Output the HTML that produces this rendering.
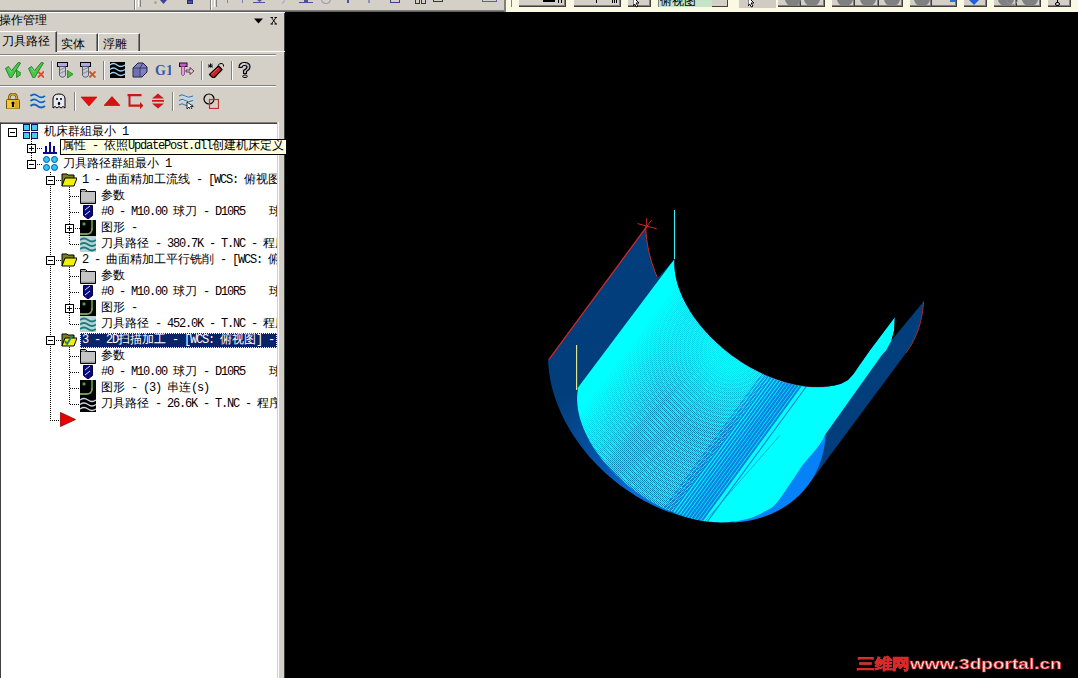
<!DOCTYPE html>
<html><head><meta charset="utf-8">
<style>
*{margin:0;padding:0;box-sizing:border-box}
html,body{width:1078px;height:678px;overflow:hidden;background:#d4d0c8;font-family:"Liberation Sans",sans-serif;position:relative}
.a{position:absolute}
.row{position:absolute;height:16px;line-height:16px;white-space:nowrap;font-family:"Liberation Mono",monospace;font-size:12px;letter-spacing:-1.2px;color:#000}
.row i{font-style:normal;font-size:12px;letter-spacing:0}
.bx{position:absolute;width:9px;height:9px;border:1px solid #000;background:#fff}
.bx:before{content:"";position:absolute;left:1px;top:3px;width:5px;height:1px;background:#000}
.bx.p:after{content:"";position:absolute;left:3px;top:1px;width:1px;height:5px;background:#000}
.dv{position:absolute;width:1px;background-image:linear-gradient(#000 50%,transparent 50%);background-size:1px 2px}
.dh{position:absolute;height:1px;background-image:linear-gradient(90deg,#000 50%,transparent 50%);background-size:2px 1px}
</style></head><body>
<div class="a" style="left:0;top:0;width:505px;height:10px;background:#d4d0c8"></div>
<div class="a" style="left:505px;top:0;width:573px;height:12px;background:#fbf9e2"></div>
<div class="a" style="left:0;top:10px;width:505px;height:1px;background:#808080"></div>
<div class="a" style="left:0;top:11px;width:505px;height:1px;background:#606060"></div>
<div class="a" style="left:0;top:12px;width:285px;height:1px;background:#fff"></div>
<div class="a" style="left:134px;top:0;width:1px;height:10px;background:#808080"></div>
<div class="a" style="left:135px;top:0;width:1px;height:10px;background:#fff"></div>
<div class="a" style="left:210px;top:0;width:1px;height:10px;background:#808080"></div>
<div class="a" style="left:211px;top:0;width:1px;height:10px;background:#fff"></div>
<div class="a" style="left:504px;top:0;width:2px;height:12px;background:#808080"></div>
<div class="a" style="left:138px;top:0;width:3px;height:7px;border-left:1px solid #fff;border-right:1px solid #808080"></div>
<div class="a" style="left:214px;top:0;width:3px;height:7px;border-left:1px solid #fff;border-right:1px solid #808080"></div>
<div class="a" style="left:509px;top:0;width:3px;height:7px;border-left:1px solid #fff;border-right:1px solid #808080"></div>
<div class="a" style="left:154px;top:1px;width:3px;height:3px;border-radius:2px;background:#b0a890"></div>
<svg class="a" style="left:160px;top:0" width="8" height="5"><path d="M0 0h7l-3.5 4z" fill="#4040a0"/></svg>
<div class="a" style="left:187px;top:0;width:6px;height:4px;background:#5050a0;border:1px solid #303070"></div>
<div class="a" style="left:227px;top:0;width:1px;height:3px;background:#8080b0"></div>
<div class="a" style="left:242px;top:0;width:1px;height:3px;background:#8080b0"></div>
<div class="a" style="left:253px;top:2px;width:12px;height:1px;background:#5050a0"></div>
<svg class="a" style="left:257px;top:0" width="6" height="3"><path d="M0 0h5l-2.5 2z" fill="#5050a0"/></svg>
<div class="a" style="left:283px;top:0;width:1px;height:4px;background:#a0a0b0;transform:rotate(40deg)"></div>
<div class="a" style="left:299px;top:2px;width:14px;height:1px;background:#5050a0"></div>
<div class="a" style="left:304px;top:0;width:4px;height:2px;background:#5050a0"></div>
<div class="a" style="left:321px;top:-5px;width:10px;height:9px;border-radius:5px;border:1px solid #9090a0"></div>
<div class="a" style="left:347px;top:0;width:2px;height:3px;background:#5050a0"></div>
<div class="a" style="left:368px;top:0;width:2px;height:3px;background:#9090c0"></div>
<div class="a" style="left:390px;top:0;width:10px;height:3px;border:1px solid #404080;border-top:0"></div>
<div class="a" style="left:415px;top:-3px;width:5px;height:7px;border:1.5px solid #303070"></div>
<div class="a" style="left:421px;top:-3px;width:5px;height:7px;border:1.5px solid #303070"></div>
<div class="a" style="left:433px;top:-2px;width:10px;height:4px;border:1.5px solid #303070"></div>
<div class="a" style="left:482px;top:-2px;width:15px;height:4px;border:1px solid #6060a0"></div>
<div class="a" style="left:519px;top:-2px;width:47px;height:9px;background:#d4d0c8;border-right:1px solid #404040;border-bottom:1px solid #404040;box-shadow:inset -1px -1px #808080"></div>
<div class="a" style="left:574px;top:-2px;width:47px;height:9px;background:#d4d0c8;border-right:1px solid #404040;border-bottom:1px solid #404040;box-shadow:inset -1px -1px #808080"></div>
<div class="a" style="left:628px;top:-2px;width:23px;height:9px;background:#d4d0c8;border-right:1px solid #404040;border-bottom:1px solid #404040;box-shadow:inset -1px -1px #808080"></div>
<div class="a" style="left:778px;top:-2px;width:23px;height:9px;background:#d4d0c8;border-right:1px solid #404040;border-bottom:1px solid #404040;box-shadow:inset -1px -1px #808080"></div>
<div class="a" style="left:801px;top:-2px;width:24px;height:9px;background:#d4d0c8;border-right:1px solid #404040;border-bottom:1px solid #404040;box-shadow:inset -1px -1px #808080"></div>
<div class="a" style="left:832px;top:-2px;width:23px;height:9px;background:#d4d0c8;border-right:1px solid #404040;border-bottom:1px solid #404040;box-shadow:inset -1px -1px #808080"></div>
<div class="a" style="left:855px;top:-2px;width:24px;height:9px;background:#d4d0c8;border-right:1px solid #404040;border-bottom:1px solid #404040;box-shadow:inset -1px -1px #808080"></div>
<div class="a" style="left:879px;top:-2px;width:24px;height:9px;background:#d4d0c8;border-right:1px solid #404040;border-bottom:1px solid #404040;box-shadow:inset -1px -1px #808080"></div>
<div class="a" style="left:910px;top:-2px;width:22px;height:9px;background:#d4d0c8;border-right:1px solid #404040;border-bottom:1px solid #404040;box-shadow:inset -1px -1px #808080"></div>
<div class="a" style="left:932px;top:-2px;width:25px;height:9px;background:#d4d0c8;border-right:1px solid #404040;border-bottom:1px solid #404040;box-shadow:inset -1px -1px #808080"></div>
<div class="a" style="left:964px;top:-2px;width:23px;height:9px;background:#d4d0c8;border-right:1px solid #404040;border-bottom:1px solid #404040;box-shadow:inset -1px -1px #808080"></div>
<div class="a" style="left:994px;top:-2px;width:23px;height:9px;background:#d4d0c8;border-right:1px solid #404040;border-bottom:1px solid #404040;box-shadow:inset -1px -1px #808080"></div>
<div class="a" style="left:1017px;top:-2px;width:24px;height:9px;background:#d4d0c8;border-right:1px solid #404040;border-bottom:1px solid #404040;box-shadow:inset -1px -1px #808080"></div>
<div class="a" style="left:1048px;top:-2px;width:23px;height:9px;background:#d4d0c8;border-right:1px solid #404040;border-bottom:1px solid #404040;box-shadow:inset -1px -1px #808080"></div>
<div class="a" style="left:739px;top:-2px;width:37px;height:10px;background:#d0ccc4"></div>
<div class="a" style="left:658px;top:-2px;width:70px;height:9px;background:#c4e4c8;border-left:1px solid #808080"></div>
<div class="a" style="left:712px;top:-2px;width:16px;height:9px;background:#d4d0c8;border-right:1px solid #404040;border-bottom:1px solid #404040"></div>
<div class="a" style="left:660px;top:-5px;font-size:12px;line-height:12px;color:#000;width:50px;overflow:hidden;height:11px">俯视图</div>
<div class="a" style="left:543px;top:0;width:12px;height:2px;background:#000"></div>
<div class="a" style="left:558px;top:0;width:1px;height:3px;background:#000"></div><div class="a" style="left:561px;top:0;width:1px;height:3px;background:#000"></div>
<div class="a" style="left:596px;top:0;width:1px;height:3px;background:#000"></div>
<div class="a" style="left:612px;top:0;width:1px;height:3px;background:#000"></div><div class="a" style="left:614px;top:0;width:1px;height:3px;background:#000"></div><div class="a" style="left:616px;top:0;width:1px;height:3px;background:#000"></div>
<svg class="a" style="left:633px;top:-3px" width="12" height="12"><path d="M0 0l6 6h-3l2 3-1.5 1-2-3-1.5 2z" fill="#fff" stroke="#000" stroke-width="1"/></svg>
<svg class="a" style="left:748px;top:-3px" width="12" height="12"><path d="M0 0l6 6h-3l2 3-1.5 1-2-3-1.5 2z" fill="#fff" stroke="#000" stroke-width="1"/></svg>
<div class="a" style="left:785px;top:-8px;width:16px;height:14px;border-radius:8px;background:#808080"></div>
<div class="a" style="left:804px;top:-8px;width:16px;height:14px;border-radius:8px;background:#808080"></div>
<div class="a" style="left:837px;top:-8px;width:16px;height:14px;border-radius:8px;background:#808080"></div>
<div class="a" style="left:860px;top:-8px;width:16px;height:14px;border-radius:8px;background:#808080"></div>
<div class="a" style="left:884px;top:-8px;width:16px;height:14px;border-radius:8px;background:#808080"></div>
<div class="a" style="left:914px;top:-8px;width:16px;height:14px;border-radius:8px;background:#808080"></div>
<div class="a" style="left:998px;top:-8px;width:16px;height:14px;border-radius:8px;background:#808080"></div>
<div class="a" style="left:1022px;top:-8px;width:16px;height:14px;border-radius:8px;background:#808080"></div>
<div class="a" style="left:950px;top:0;width:6px;height:2px;background:#3070d0"></div>
<svg class="a" style="left:969px;top:0" width="12" height="6"><path d="M0 0l5 5 5-5z" fill="#2060e0"/></svg>
<div class="a" style="left:1055px;top:2px;width:5px;height:4px;border:1px solid #000;border-radius:2px"></div>
<div class="a" style="left:1057px;top:-1px;width:1px;height:3px;background:#000"></div>
<div class="a" style="left:1006px;top:-6px;width:12px;height:11px;border-radius:6px;border:1.5px solid #909090;background:transparent"></div>
<div class="a" style="left:285px;top:12px;width:793px;height:666px;background:#000"></div>
<div class="a" style="left:284px;top:13px;width:1px;height:665px;background:#404040"></div>
<div class="a" style="left:-1px;top:13px;font-size:12px;line-height:14px;color:#000">操作管理</div>
<svg class="a" style="left:254px;top:16px" width="30" height="10"><path d="M0 2.5h9l-4.5 5z" fill="#000"/><path d="M17.5 1.5l4.5 6.5M22 1.5l-4.5 6.5" stroke="#000" stroke-width="0.9" fill="none"/><path d="M16.5 1.5h2.5M20.5 1.5h2.5M16.5 8h2.5M20.5 8h2.5" stroke="#000" stroke-width="1.1"/></svg>
<div class="a" style="left:57px;top:51px;width:228px;height:1px;background:#fff"></div>
<div class="a" style="left:-1px;top:31px;width:58px;height:21px;background:#d4d0c8;border-top:1px solid #fff;border-right:1px solid #404040;box-shadow:inset -1px 0 #808080"></div>
<div class="a" style="left:2px;top:34px;font-size:12px;line-height:14px">刀具路径</div>
<div class="a" style="left:58px;top:33px;width:40px;height:18px;border-top:1px solid #fff;border-right:1px solid #404040;box-shadow:inset -1px 0 #808080"></div>
<div class="a" style="left:61px;top:37px;font-size:12px;line-height:14px">实体</div>
<div class="a" style="left:98px;top:33px;width:42px;height:18px;border-top:1px solid #fff;border-left:1px solid #fff;border-right:1px solid #404040;box-shadow:inset -1px 0 #808080"></div>
<div class="a" style="left:103px;top:37px;font-size:12px;line-height:14px">浮雕</div>
<div class="a" style="left:0;top:54px;width:276px;height:1px;background:#808080"></div>
<div class="a" style="left:0;top:55px;width:276px;height:1px;background:#fff"></div>
<div class="a" style="left:0;top:85px;width:276px;height:1px;background:#808080"></div>
<div class="a" style="left:0;top:86px;width:276px;height:1px;background:#fff"></div>
<div class="a" style="left:51px;top:61px;width:1px;height:19px;background:#808080"></div>
<div class="a" style="left:52px;top:61px;width:1px;height:19px;background:#fff"></div>
<div class="a" style="left:103px;top:61px;width:1px;height:19px;background:#808080"></div>
<div class="a" style="left:104px;top:61px;width:1px;height:19px;background:#fff"></div>
<div class="a" style="left:201px;top:61px;width:1px;height:19px;background:#808080"></div>
<div class="a" style="left:202px;top:61px;width:1px;height:19px;background:#fff"></div>
<div class="a" style="left:231px;top:61px;width:1px;height:19px;background:#808080"></div>
<div class="a" style="left:232px;top:61px;width:1px;height:19px;background:#fff"></div>
<div class="a" style="left:74px;top:92px;width:1px;height:19px;background:#808080"></div>
<div class="a" style="left:75px;top:92px;width:1px;height:19px;background:#fff"></div>
<div class="a" style="left:172px;top:92px;width:1px;height:19px;background:#808080"></div>
<div class="a" style="left:173px;top:92px;width:1px;height:19px;background:#fff"></div>
<svg class="a" style="left:5px;top:62px" width="16" height="16" viewBox="0 0 16 16">
<path d="M0.5 6.5l3-2 3 4.2 7-8.5 2 0.8-9 14.8h-1.5z" fill="#48c848" stroke="#207820" stroke-width="0.9" stroke-linejoin="round"/>
<path d="M3.5 6.2l2.8 3.8" stroke="#90e890" stroke-width="0.8"/>
<path d="M11.5 8v7.7l5.5-3.9z" fill="#40c040" stroke="#208020" stroke-width="0.8"/></svg>
<svg class="a" style="left:28px;top:62px" width="16" height="16" viewBox="0 0 16 16">
<path d="M0.5 6.5l3-2 3 4.2 7-8.5 2 0.8-9 14.8h-1.5z" fill="#48c848" stroke="#207820" stroke-width="0.9" stroke-linejoin="round"/>
<path d="M3.5 6.2l2.8 3.8" stroke="#90e890" stroke-width="0.8"/>
<path d="M10 9.5l6 6M16 9.5l-6 6" stroke="#d85030" stroke-width="1.8"/></svg>
<svg class="a" style="left:57px;top:62px" width="16" height="16" viewBox="0 0 16 16">
<rect x="0.5" y="0.5" width="10" height="4" fill="#b0a8e0" stroke="#000" stroke-width="1"/>
<path d="M2.5 4.5h6v9q-3 3.5-6 0z" fill="#c8c8d8" stroke="#505060" stroke-width="0.9"/>
<path d="M3 8l5-2.5M3 11.5l5-2.5" stroke="#808090" stroke-width="0.9"/>
<path d="M10.5 8.5v7.5l5.5-3.75z" fill="#40c040" stroke="#208020" stroke-width="0.8"/></svg>
<svg class="a" style="left:80px;top:62px" width="16" height="16" viewBox="0 0 16 16">
<rect x="0.5" y="0.5" width="10" height="4" fill="#b0a8e0" stroke="#000" stroke-width="1"/>
<path d="M2.5 4.5h6v9q-3 3.5-6 0z" fill="#c8c8d8" stroke="#505060" stroke-width="0.9"/>
<path d="M3 8l5-2.5M3 11.5l5-2.5" stroke="#808090" stroke-width="0.9"/>
<path d="M9.5 9.5l6 6M15.5 9.5l-6 6" stroke="#d85030" stroke-width="1.8"/></svg>
<svg class="a" style="left:110px;top:62px" width="16" height="16" viewBox="0 0 16 16">
<rect x="0" y="0" width="15" height="16" fill="#000"/>
<path d="M0 3q3.5-3 7 0t8 0M0 7.5q3.5-3 7 0t8 0M0 12q3.5-3 7 0t8 0" stroke="#a0d0f0" stroke-width="1.3" fill="none"/></svg>
<svg class="a" style="left:132px;top:62px" width="16" height="16" viewBox="0 0 16 16">
<path d="M1 6l5-5h5l4 4v5l-5 5H1z" fill="#8080c0" stroke="#202040" stroke-width="1"/>
<path d="M1 6h7l3-5M8 6v9M8 6l7 0" stroke="#303060" stroke-width="0.9" fill="none"/>
<path d="M2 7h5v7H2z" fill="#7070b0"/></svg>
<svg class="a" style="left:155px;top:62px" width="16" height="16" viewBox="0 0 16 16"><text x="0" y="13" font-family="Liberation Serif" font-weight="bold" font-size="14" fill="#3a5aa0">G1</text></svg>
<svg class="a" style="left:179px;top:62px" width="16" height="16" viewBox="0 0 16 16">
<rect x="0.5" y="1" width="7.5" height="3.5" fill="#c060c0" stroke="#300030" stroke-width="1"/>
<path d="M2.5 4.5h3v8q-1.5 2.5-3 0z" fill="#e0a0e0" stroke="#804080" stroke-width="0.8"/>
<path d="M7 8h4v-2.5l4 3.5-4 3.5v-2.5h-4z" fill="#f0c0e0" stroke="#402030" stroke-width="0.8"/></svg>
<svg class="a" style="left:208px;top:62px" width="16" height="16" viewBox="0 0 16 16">
<path d="M1.5 12.5l9-8.5 3.5 3.5-8.5 9z" fill="#d02020" stroke="#000" stroke-width="1.3" stroke-linejoin="round"/>
<path d="M3 12.5l7-6.5" stroke="#f06060" stroke-width="1"/>
<path d="M10 3.5q1-2.5 4-2 2 0.5 1.5 3" stroke="#000" stroke-width="1" fill="none"/>
<path d="M0.5 2.5l4 3M4.5 2l-4 3.5M0 4h5M2.5 1.5v4" stroke="#000" stroke-width="0.9"/></svg>
<svg class="a" style="left:236px;top:62px" width="16" height="16" viewBox="0 0 16 16">
<path d="M3 5.5q0-5 5.5-5t5.5 4.5q0 2.5-3.5 4.5v2H7.5V8.5q3.5-2 3.5-3.5t-2.5-1.5q-2.5 0-2.5 2z" fill="#b4b4bc" stroke="#000" stroke-width="1.1" stroke-linejoin="round"/>
<path d="M5 4q1-2.5 4-2.5" stroke="#f0f0f0" stroke-width="1" fill="none"/>
<ellipse cx="9" cy="14.3" rx="2.3" ry="1.3" fill="#c8c8d0" stroke="#000" stroke-width="1"/></svg>
<svg class="a" style="left:6px;top:93px" width="16" height="16" viewBox="0 0 16 16">
<path d="M3.2 8V5.5q0-4.5 3.8-4.5t3.8 4.5V8" stroke="#705000" stroke-width="2.6" fill="none"/>
<path d="M3.2 8V5.5q0-4.5 3.8-4.5t3.8 4.5V8" stroke="#f0d050" stroke-width="1" fill="none"/>
<rect x="0.5" y="6.5" width="13" height="9.5" rx="1" fill="#f0c830" stroke="#705000" stroke-width="1"/>
<rect x="9" y="7.5" width="3.5" height="7.5" fill="#d8a820"/>
<circle cx="7" cy="10" r="1.5" fill="#000"/><path d="M6.2 10.5h1.6l0.3 3.5h-2.2z" fill="#000"/></svg>
<svg class="a" style="left:30px;top:93px" width="16" height="16" viewBox="0 0 16 16">
<path d="M0.5 3q3.5-3 7 0t7.5 0M0.5 8q3.5-3 7 0t7.5 0M0.5 13q3.5-3 7 0t7.5 0" stroke="#1860c0" stroke-width="2" fill="none"/>
<path d="M1 4.6q3.5-3 7 0t7 0M1 9.6q3.5-3 7 0t7 0" stroke="#b0dcff" stroke-width="1.1" fill="none"/></svg>
<svg class="a" style="left:52px;top:93px" width="16" height="16" viewBox="0 0 16 16">
<path d="M1 15V6q0-5 6-5t6 5v9l-2-1.5-2 1.5-2-1.5-2 1.5-2-1.5z" fill="#e8e8f0" stroke="#000" stroke-width="1"/>
<circle cx="5" cy="6" r="1" fill="#000"/><circle cx="9" cy="6" r="1" fill="#000"/><ellipse cx="7" cy="10.5" rx="1.2" ry="1.8" fill="#000"/></svg>
<svg class="a" style="left:81px;top:93px" width="16" height="16" viewBox="0 0 16 16"><path d="M0 4h16l-8 9z" fill="#e01010" stroke="#c00000" stroke-width="0.6"/></svg>
<svg class="a" style="left:104px;top:93px" width="16" height="16" viewBox="0 0 16 16"><path d="M0 12.5h16l-8-9z" fill="#d81010" stroke="#b00000" stroke-width="0.6"/></svg>
<svg class="a" style="left:127px;top:93px" width="16" height="16" viewBox="0 0 16 16"><path d="M0.5 1h14v2.2H3.5v8.3h9.5v-2.5l3.5 3.6-3.5 3.6v-2.5H1.5V3.2h-1z" fill="#c81818"/></svg>
<svg class="a" style="left:151px;top:93px" width="16" height="16" viewBox="0 0 16 16"><path d="M7 0.5l6 5H1z M1 7h12v1.8H1z M1 10.5h12l-6 5z" fill="#d01818"/></svg>
<svg class="a" style="left:179px;top:93px" width="16" height="16" viewBox="0 0 16 16">
<path d="M0 3q3-2.5 6 0t8 0M0 7.5q3-2.5 6 0t8 0M0 12q3-2.5 6 0t8 0" stroke="#3070b0" stroke-width="1" fill="none"/>
<path d="M1 4.5q3-2.5 6 0t7 0M1 9q3-2.5 6 0t7 0" stroke="#b8e0ff" stroke-width="1" fill="none"/>
<path d="M8 9l0 7 2-2 1.5 3 1.5-0.8-1.5-2.7h2.8z" fill="#fff" stroke="#000" stroke-width="0.8"/></svg>
<svg class="a" style="left:203px;top:93px" width="16" height="16" viewBox="0 0 16 16">
<circle cx="6" cy="6" r="5" fill="none" stroke="#000" stroke-width="1.2"/>
<rect x="6.5" y="6.5" width="9" height="9" fill="none" stroke="#c03030" stroke-width="1.2"/></svg>
<div class="a" style="left:0;top:122px;width:278px;height:556px;background:#fff;border-left:1px solid #404040;border-top:1px solid #808080;box-shadow:inset 0 1px #404040"></div>
<div class="a" style="left:278px;top:122px;width:1px;height:556px;background:#fff"></div>
<div class="a" style="left:277px;top:122px;width:1px;height:556px;background:#d4d0c8"></div>
<div class="a" style="left:0;top:0;width:277px;height:678px;overflow:hidden"><div class="dv" style="left:31px;top:139px;height:26px"></div><div class="dh" style="left:37px;top:148px;width:6px"></div><div class="dh" style="left:37px;top:164px;width:6px"></div><div class="dv" style="left:50px;top:172px;height:168px"></div><div class="dh" style="left:56px;top:180px;width:5px"></div><div class="dh" style="left:56px;top:260px;width:5px"></div><div class="dh" style="left:56px;top:340px;width:5px"></div><div class="dh" style="left:50px;top:420px;width:10px"></div><div class="dv" style="left:50px;top:340px;height:80px"></div><div class="dv" style="left:69px;top:187px;height:57px"></div><div class="dh" style="left:70px;top:196px;width:10px"></div><div class="dh" style="left:70px;top:212px;width:10px"></div><div class="dh" style="left:75px;top:228px;width:5px"></div><div class="dh" style="left:70px;top:244px;width:10px"></div><div class="dv" style="left:69px;top:267px;height:57px"></div><div class="dh" style="left:70px;top:276px;width:10px"></div><div class="dh" style="left:70px;top:292px;width:10px"></div><div class="dh" style="left:75px;top:308px;width:5px"></div><div class="dh" style="left:70px;top:324px;width:10px"></div><div class="dv" style="left:69px;top:347px;height:57px"></div><div class="dh" style="left:70px;top:356px;width:10px"></div><div class="dh" style="left:70px;top:372px;width:10px"></div><div class="dh" style="left:70px;top:388px;width:10px"></div><div class="dh" style="left:70px;top:404px;width:10px"></div><div class="bx " style="left:8px;top:128px"></div><svg class="a" style="left:23px;top:124px" width="15" height="15" viewBox="0 0 15 15"><g fill="#40d0e8" stroke="#101070" stroke-width="1"><rect x="0.5" y="0.5" width="6" height="6"/><rect x="8.5" y="0.5" width="6" height="6"/><rect x="0.5" y="8.5" width="6" height="6"/><rect x="8.5" y="8.5" width="6" height="6"/></g></svg><div class="row" style="left:44px;top:124px;color:#000"><i>机床群組最小</i>&nbsp;1</div><div class="bx p" style="left:27px;top:144px"></div><svg class="a" style="left:43px;top:142px" width="14" height="12" viewBox="0 0 14 12"><g fill="#0a0a90"><rect x="0" y="10" width="14" height="2"/><rect x="2" y="4" width="2" height="6"/><rect x="6" y="0" width="2" height="10"/><rect x="10" y="4" width="2" height="6"/></g></svg><div class="row" style="left:63px;top:140px;color:#000"><i>属性</i></div><div class="bx " style="left:27px;top:160px"></div><svg class="a" style="left:43px;top:156px" width="15" height="15" viewBox="0 0 15 15"><g fill="#28c8f0" stroke="#0850b0" stroke-width="1"><circle cx="3.5" cy="3.5" r="3"/><circle cx="11.5" cy="3.5" r="3"/><circle cx="3.5" cy="11.5" r="3"/><circle cx="11.5" cy="11.5" r="3"/></g></svg><div class="row" style="left:63px;top:156px;color:#000"><i>刀具路径群組最小</i>&nbsp;1</div><div class="bx " style="left:46px;top:176px"></div><svg class="a" style="left:61px;top:172px" width="16" height="16" viewBox="0 0 16 16">
<path d="M1 14V2h5l1 1h6v3" fill="#808020" stroke="#000" stroke-width="1"/>
<path d="M1 14l3-8h12l-3 8z" fill="#f0f010" stroke="#000" stroke-width="1"/></svg><div class="row" style="left:82px;top:172px;color:#000">1&nbsp;-&nbsp;<i>曲面精加工流线</i>&nbsp;-&nbsp;[WCS:&nbsp;<i>俯视图</i>]&nbsp;-&nbsp;[<i>刀具面</i>:&nbsp;<i>俯视图</i>]</div><svg class="a" style="left:80px;top:188px" width="16" height="16" viewBox="0 0 16 16">
<path d="M0.5 15.5V1.5h5l2 2h8v12z" fill="#c4c4c4" stroke="#000" stroke-width="1"/>
<path d="M0.5 3.5h7" stroke="#000" stroke-width="0.8"/><rect x="2" y="2.5" width="3" height="1.5" fill="#888"/>
<rect x="1" y="13.5" width="14" height="1.5" fill="#999"/></svg><div class="row" style="left:101px;top:188px;color:#000"><i>参数</i></div><svg class="a" style="left:83px;top:205px" width="10" height="15" viewBox="0 0 10 15"><path d="M0.5 0.5h9v10l-4.5 3.5-4.5-3.5z" fill="#0a0a80" stroke="#000040" stroke-width="1"/><path d="M2 5l5-4M2 10l5-4" stroke="#fff" stroke-width="0.9"/></svg><div class="row" style="left:101px;top:204px;color:#000">#0&nbsp;-&nbsp;M10.00&nbsp;<i>球刀</i>&nbsp;-&nbsp;D10R5&nbsp;&nbsp;&nbsp;&nbsp;<i>球刀</i></div><div class="bx p" style="left:65px;top:224px"></div><svg class="a" style="left:80px;top:220px" width="16" height="16" viewBox="0 0 16 16"><rect x="0" y="0" width="16" height="16" fill="#000"/><path d="M4 2l2 2-2 2-2-2z" fill="#40a040"/><path d="M12 0v9q0 5-5 5H0" stroke="#60c060" stroke-width="1.4" fill="none"/><path d="M12 8q0 6-6 6H0" stroke="#a0a040" stroke-width="1" fill="none"/></svg><div class="row" style="left:101px;top:220px;color:#000"><i>图形</i>&nbsp;-</div><svg class="a" style="left:80px;top:236px" width="16" height="16" viewBox="0 0 16 16"><rect x="0" y="0" width="16" height="16" fill="#b8d4d8"/><path d="M0 4q4-3 8 0t8 0M0 8.5q4-3 8 0t8 0M0 13q4-3 8 0t8 0" stroke="#1a7a7a" stroke-width="1.8" fill="none"/></svg><div class="row" style="left:101px;top:236px;color:#000"><i>刀具路径</i>&nbsp;-&nbsp;380.7K&nbsp;-&nbsp;T.NC&nbsp;-&nbsp;<i>程序号码</i>&nbsp;0</div><div class="bx " style="left:46px;top:256px"></div><svg class="a" style="left:61px;top:252px" width="16" height="16" viewBox="0 0 16 16">
<path d="M1 14V2h5l1 1h6v3" fill="#808020" stroke="#000" stroke-width="1"/>
<path d="M1 14l3-8h12l-3 8z" fill="#f0f010" stroke="#000" stroke-width="1"/></svg><div class="row" style="left:82px;top:252px;color:#000">2&nbsp;-&nbsp;<i>曲面精加工平行铣削</i>&nbsp;-&nbsp;[WCS:&nbsp;<i>俯视图</i>]</div><svg class="a" style="left:80px;top:268px" width="16" height="16" viewBox="0 0 16 16">
<path d="M0.5 15.5V1.5h5l2 2h8v12z" fill="#c4c4c4" stroke="#000" stroke-width="1"/>
<path d="M0.5 3.5h7" stroke="#000" stroke-width="0.8"/><rect x="2" y="2.5" width="3" height="1.5" fill="#888"/>
<rect x="1" y="13.5" width="14" height="1.5" fill="#999"/></svg><div class="row" style="left:101px;top:268px;color:#000"><i>参数</i></div><svg class="a" style="left:83px;top:285px" width="10" height="15" viewBox="0 0 10 15"><path d="M0.5 0.5h9v10l-4.5 3.5-4.5-3.5z" fill="#0a0a80" stroke="#000040" stroke-width="1"/><path d="M2 5l5-4M2 10l5-4" stroke="#fff" stroke-width="0.9"/></svg><div class="row" style="left:101px;top:284px;color:#000">#0&nbsp;-&nbsp;M10.00&nbsp;<i>球刀</i>&nbsp;-&nbsp;D10R5&nbsp;&nbsp;&nbsp;&nbsp;<i>球刀</i></div><div class="bx p" style="left:65px;top:304px"></div><svg class="a" style="left:80px;top:300px" width="16" height="16" viewBox="0 0 16 16"><rect x="0" y="0" width="16" height="16" fill="#000"/><path d="M4 2l2 2-2 2-2-2z" fill="#40a040"/><path d="M12 0v9q0 5-5 5H0" stroke="#60c060" stroke-width="1.4" fill="none"/><path d="M12 8q0 6-6 6H0" stroke="#a0a040" stroke-width="1" fill="none"/></svg><div class="row" style="left:101px;top:300px;color:#000"><i>图形</i>&nbsp;-</div><svg class="a" style="left:80px;top:316px" width="16" height="16" viewBox="0 0 16 16"><rect x="0" y="0" width="16" height="16" fill="#b8d4d8"/><path d="M0 4q4-3 8 0t8 0M0 8.5q4-3 8 0t8 0M0 13q4-3 8 0t8 0" stroke="#1a7a7a" stroke-width="1.8" fill="none"/></svg><div class="row" style="left:101px;top:316px;color:#000"><i>刀具路径</i>&nbsp;-&nbsp;452.0K&nbsp;-&nbsp;T.NC&nbsp;-&nbsp;<i>程序号码</i>&nbsp;0</div><div class="bx " style="left:46px;top:336px"></div><svg class="a" style="left:61px;top:332px" width="16" height="16" viewBox="0 0 16 16">
<path d="M1 14V2h5l1 1h6v3" fill="#808020" stroke="#000" stroke-width="1"/>
<path d="M1 14l3-8h12l-3 8z" fill="#f0f010" stroke="#000" stroke-width="1"/>
<path d="M4 9l2 3 5-8" stroke="#208080" stroke-width="2" fill="none"/></svg><div class="a" style="left:80px;top:333px;width:197px;height:15px;background:#0a246a;outline:1px dotted #fff;outline-offset:-1px"></div><div class="row" style="left:82px;top:332px;color:#fff">3&nbsp;-&nbsp;2D<i>扫描加工</i>&nbsp;-&nbsp;[WCS:&nbsp;<i>俯视图</i>]&nbsp;-&nbsp;[<i>刀具面</i>:&nbsp;<i>俯视图</i>]</div><svg class="a" style="left:80px;top:348px" width="16" height="16" viewBox="0 0 16 16">
<path d="M0.5 15.5V1.5h5l2 2h8v12z" fill="#c4c4c4" stroke="#000" stroke-width="1"/>
<path d="M0.5 3.5h7" stroke="#000" stroke-width="0.8"/><rect x="2" y="2.5" width="3" height="1.5" fill="#888"/>
<rect x="1" y="13.5" width="14" height="1.5" fill="#999"/></svg><div class="row" style="left:101px;top:348px;color:#000"><i>参数</i></div><svg class="a" style="left:83px;top:365px" width="10" height="15" viewBox="0 0 10 15"><path d="M0.5 0.5h9v10l-4.5 3.5-4.5-3.5z" fill="#0a0a80" stroke="#000040" stroke-width="1"/><path d="M2 5l5-4M2 10l5-4" stroke="#fff" stroke-width="0.9"/></svg><div class="row" style="left:101px;top:364px;color:#000">#0&nbsp;-&nbsp;M10.00&nbsp;<i>球刀</i>&nbsp;-&nbsp;D10R5&nbsp;&nbsp;&nbsp;&nbsp;<i>球刀</i></div><svg class="a" style="left:80px;top:380px" width="16" height="16" viewBox="0 0 16 16"><rect x="0" y="0" width="16" height="16" fill="#000"/><path d="M4 2l2 2-2 2-2-2z" fill="#40a040"/><path d="M12 0v9q0 5-5 5H0" stroke="#60c060" stroke-width="1.4" fill="none"/><path d="M12 8q0 6-6 6H0" stroke="#a0a040" stroke-width="1" fill="none"/></svg><div class="row" style="left:101px;top:380px;color:#000"><i>图形</i>&nbsp;-&nbsp;(3)&nbsp;<i>串连</i>(s)</div><svg class="a" style="left:80px;top:396px" width="16" height="16" viewBox="0 0 16 16"><rect x="0" y="0" width="16" height="16" fill="#000"/><path d="M0 4q4-3 8 0t8 0M0 8.5q4-3 8 0t8 0M0 13q4-3 8 0t8 0" stroke="#d0d8e0" stroke-width="1.3" fill="none"/></svg><div class="row" style="left:101px;top:396px;color:#000"><i>刀具路径</i>&nbsp;-&nbsp;26.6K&nbsp;-&nbsp;T.NC&nbsp;-&nbsp;<i>程序号码</i>&nbsp;0</div><svg class="a" style="left:60px;top:412px" width="16" height="15" viewBox="0 0 16 15"><path d="M0.5 0.5l15 7-15 7z" fill="#e80000" stroke="#900000" stroke-width="0.8"/></svg></div>
<div class="a" style="left:60px;top:139px;width:227px;height:16px;background:#ffffe1;border:1px solid #000"></div>
<div class="row" style="left:62px;top:139px;line-height:15px"><i>属性</i>&nbsp;-&nbsp;<i>依照</i>UpdatePost.dll<i>创建机床定义</i></div>
<svg class="a" style="left:0;top:0" width="1078" height="678" viewBox="0 0 1078 678"><defs>
<linearGradient id="gdb" x1="590" y1="300" x2="640" y2="505" gradientUnits="userSpaceOnUse"><stop offset="0" stop-color="#033e7c"/><stop offset="0.55" stop-color="#044284"/><stop offset="0.8" stop-color="#0652a8"/><stop offset="1" stop-color="#0866cc"/></linearGradient>
<clipPath id="cs"><path d="M646.90 226.30 L549.00 359.30 L548.05 359.07 L548.19 362.78 L548.45 366.52 L548.83 370.28 L549.32 374.05 L549.94 377.85 L550.67 381.65 L551.53 385.47 L552.49 389.29 L553.58 393.12 L554.78 396.94 L556.09 400.76 L557.51 404.57 L559.05 408.37 L560.70 412.16 L562.45 415.93 L564.31 419.68 L566.28 423.41 L568.35 427.11 L570.53 430.78 L572.80 434.42 L575.17 438.02 L577.64 441.58 L580.20 445.10 L582.86 448.58 L585.60 452.00 L588.43 455.38 L591.35 458.70 L594.35 461.96 L597.42 465.17 L600.58 468.31 L603.81 471.38 L607.11 474.39 L610.48 477.33 L613.91 480.19 L617.41 482.98 L620.97 485.69 L624.58 488.33 L628.25 490.87 L631.97 493.34 L635.74 495.71 L639.55 498.00 L643.40 500.20 L647.29 502.30 L651.21 504.31 L655.16 506.22 L659.14 508.04 L663.15 509.76 L667.17 511.37 L671.22 512.88 L675.27 514.29 L679.34 515.60 L683.41 516.79 L687.48 517.89 L691.56 518.87 L695.63 519.74 L699.69 520.51 L703.75 521.16 L707.78 521.70 L711.81 522.14 L715.80 522.46 L719.78 522.67 L723.72 522.76 L727.64 522.75 L731.52 522.62 L735.36 522.38 L739.16 522.03 L742.91 521.57 L746.62 520.99 L750.27 520.31 L753.87 519.51 L757.42 518.61 L760.90 517.59 L764.32 516.47 L767.67 515.25 L770.95 513.91 L774.16 512.48 L777.30 510.93 L780.35 509.29 L783.33 507.55 L786.22 505.71 L789.03 503.77 L791.75 501.73 L794.39 499.60 L796.92 497.38 L799.37 495.06 L801.71 492.66 L803.96 490.18 L806.11 487.61 L808.16 484.95 L905.96 352.95 L907.59 350.66 L909.16 348.31 L910.65 345.91 L912.06 343.46 L913.39 340.96 L914.65 338.41 L915.82 335.81 L916.92 333.16 L917.94 330.47 L918.88 327.74 L919.73 324.97 L920.50 322.16 L921.19 319.31 L921.80 316.42 L922.32 313.50 L922.76 310.55 L923.12 307.57 L923.39 304.56 L923.58 301.52 L891.30 340.80 L894.20 330.10 L894.80 317.20 L870.00 350.20 L860.00 364.50 L853.50 374.00 L848.00 380.00 L841.61 383.52 L839.36 384.22 L837.06 384.85 L834.70 385.40 L832.28 385.87 L829.82 386.27 L827.30 386.59 L824.74 386.84 L822.13 387.01 L819.48 387.10 L816.79 387.11 L814.06 387.05 L811.29 386.91 L808.49 386.69 L805.66 386.39 L802.80 386.02 L799.92 385.57 L797.01 385.04 L794.08 384.44 L791.14 383.77 L788.18 383.02 L785.20 382.19 L782.22 381.30 L779.23 380.33 L776.24 379.29 L773.24 378.17 L770.25 376.99 L767.26 375.74 L764.27 374.43 L761.30 373.05 L758.33 371.60 L755.38 370.09 L752.45 368.52 L749.54 366.88 L746.65 365.19 L743.78 363.44 L740.94 361.63 L738.13 359.77 L735.36 357.86 L732.62 355.89 L729.91 353.88 L727.25 351.82 L724.63 349.71 L722.05 347.56 L719.52 345.36 L717.04 343.13 L714.61 340.86 L712.24 338.55 L709.92 336.21 L707.66 333.83 L705.45 331.43 L703.31 329.00 L701.24 326.55 L699.23 324.07 L697.28 321.57 L695.41 319.05 L693.61 316.52 L691.88 313.97 L690.22 311.41 L688.64 308.84 L687.14 306.26 L685.71 303.68 L684.36 301.10 L683.10 298.51 L681.92 295.93 L680.82 293.35 L679.80 290.78 L678.87 288.22 L678.02 285.67 L677.26 283.14 L676.59 280.62 L676.01 278.11 L675.51 275.63 L675.11 273.17 L674.79 270.74 L674.56 268.33 L674.42 265.95 L674.37 263.61 L674.41 261.30 L674.54 259.02 L659.00 276.70 L657.09 276.95 L655.98 274.26 L654.93 271.57 L653.93 268.88 L652.99 266.18 L652.10 263.47 L651.28 260.77 L650.51 258.07 L649.79 255.36 L649.14 252.66 L648.54 249.97 L648.00 247.27 L647.52 244.59 L647.10 241.91 L646.74 239.24 L646.44 236.57 L646.20 233.92 L646.01 231.28 L645.89 228.65 L645.83 226.03 Z"/></clipPath>
<clipPath id="cc"><path d="M674.50 259.00 L577.30 388.50 L578.00 388.83 L577.65 390.96 L577.40 393.12 L577.22 395.31 L577.13 397.54 L577.13 399.81 L577.21 402.10 L577.38 404.43 L577.63 406.78 L577.96 409.16 L578.38 411.56 L578.89 413.98 L579.48 416.41 L580.15 418.87 L580.90 421.34 L581.73 423.82 L582.65 426.32 L583.65 428.82 L584.72 431.33 L585.88 433.84 L587.11 436.36 L588.42 438.87 L589.80 441.38 L591.26 443.89 L592.79 446.39 L594.39 448.88 L596.07 451.37 L597.81 453.84 L599.62 456.29 L601.49 458.73 L603.43 461.14 L605.44 463.54 L607.50 465.91 L609.62 468.26 L611.80 470.58 L614.04 472.87 L616.33 475.13 L618.67 477.36 L621.06 479.55 L623.50 481.70 L625.98 483.82 L628.51 485.89 L631.07 487.93 L633.68 489.92 L636.33 491.86 L639.01 493.76 L641.72 495.60 L644.46 497.40 L647.23 499.14 L650.02 500.83 L652.84 502.47 L655.68 504.05 L658.54 505.57 L661.41 507.03 L664.29 508.43 L667.19 509.77 L670.10 511.05 L673.01 512.27 L675.92 513.42 L678.84 514.50 L681.75 515.52 L684.66 516.47 L687.56 517.35 L690.46 518.16 L693.34 518.90 L696.21 519.58 L699.06 520.18 L701.90 520.71 L704.71 521.16 L707.50 521.55 L710.26 521.86 L713.00 522.10 L715.70 522.27 L718.38 522.36 L721.01 522.38 L723.61 522.33 L726.17 522.20 L728.69 522.00 L731.16 521.73 L733.59 521.39 L734.00 521.80 L735.35 521.52 L737.17 521.17 L739.33 520.75 L741.73 520.28 L744.24 519.75 L746.75 519.18 L749.14 518.56 L751.30 517.90 L753.30 517.17 L755.29 516.36 L757.25 515.49 L759.17 514.58 L761.02 513.65 L762.79 512.73 L764.45 511.84 L766.00 511.00 L767.40 510.25 L768.65 509.58 L769.79 508.95 L770.86 508.32 L771.88 507.65 L772.88 506.90 L773.91 506.03 L775.00 505.00 L776.11 503.81 L777.21 502.50 L778.31 501.09 L779.41 499.59 L780.52 498.02 L781.64 496.39 L782.80 494.71 L784.00 493.00 L785.25 491.21 L786.56 489.31 L787.90 487.33 L789.26 485.31 L790.62 483.28 L791.96 481.28 L793.26 479.34 L794.50 477.50 L795.65 475.77 L796.73 474.12 L797.75 472.53 L798.76 470.97 L799.79 469.41 L800.87 467.83 L802.03 466.20 L803.30 464.50 L804.75 462.68 L806.36 460.74 L808.07 458.74 L809.82 456.72 L811.56 454.74 L813.20 452.84 L814.71 451.08 L816.00 449.50 L817.09 448.11 L818.03 446.87 L818.86 445.75 L819.59 444.72 L820.24 443.76 L820.85 442.83 L821.42 441.92 L822.00 441.00 L822.56 440.05 L823.09 439.08 L823.58 438.13 L824.02 437.22 L824.42 436.37 L824.77 435.62 L825.06 434.99 L825.30 434.50 L881.80 355.00 L886.00 350.50 L891.30 340.80 L894.20 330.10 L894.80 317.20 L870.00 350.20 L860.00 364.50 L853.50 374.00 L848.00 380.00 L841.61 383.52 L839.36 384.22 L837.06 384.85 L834.70 385.40 L832.28 385.87 L829.82 386.27 L827.30 386.59 L824.74 386.84 L822.13 387.01 L819.48 387.10 L816.79 387.11 L814.06 387.05 L811.29 386.91 L808.49 386.69 L805.66 386.39 L802.80 386.02 L799.92 385.57 L797.01 385.04 L794.08 384.44 L791.14 383.77 L788.18 383.02 L785.20 382.19 L782.22 381.30 L779.23 380.33 L776.24 379.29 L773.24 378.17 L770.25 376.99 L767.26 375.74 L764.27 374.43 L761.30 373.05 L758.33 371.60 L755.38 370.09 L752.45 368.52 L749.54 366.88 L746.65 365.19 L743.78 363.44 L740.94 361.63 L738.13 359.77 L735.36 357.86 L732.62 355.89 L729.91 353.88 L727.25 351.82 L724.63 349.71 L722.05 347.56 L719.52 345.36 L717.04 343.13 L714.61 340.86 L712.24 338.55 L709.92 336.21 L707.66 333.83 L705.45 331.43 L703.31 329.00 L701.24 326.55 L699.23 324.07 L697.28 321.57 L695.41 319.05 L693.61 316.52 L691.88 313.97 L690.22 311.41 L688.64 308.84 L687.14 306.26 L685.71 303.68 L684.36 301.10 L683.10 298.51 L681.92 295.93 L680.82 293.35 L679.80 290.78 L678.87 288.22 L678.02 285.67 L677.26 283.14 L676.59 280.62 L676.01 278.11 L675.51 275.63 L675.11 273.17 L674.79 270.74 L674.56 268.33 L674.42 265.95 L674.37 263.61 L674.41 261.30 L674.54 259.02 Z"/></clipPath>
<pattern id="chk" patternUnits="userSpaceOnUse" width="2" height="2"><rect width="1" height="1" fill="#0070a8"/><rect x="1" y="1" width="1" height="1" fill="#0070a8"/></pattern>
<linearGradient id="gma" x1="687.3" y1="268.6" x2="738.3" y2="307.2" gradientUnits="userSpaceOnUse"><stop offset="0" stop-color="#000"/><stop offset="1" stop-color="#fff"/></linearGradient>
<mask id="ma" maskUnits="userSpaceOnUse" x="500" y="200" width="450" height="350"><rect x="500" y="200" width="450" height="350" fill="url(#gma)"/></mask>
<clipPath id="cd"><path d="M674.5 240 L555 400 L590 540 L651 540 L783 360 L760 250 Z"/></clipPath>
</defs>
<path d="M646.90 226.30 L549.00 359.30 L548.05 359.07 L548.19 362.78 L548.45 366.52 L548.83 370.28 L549.32 374.05 L549.94 377.85 L550.67 381.65 L551.53 385.47 L552.49 389.29 L553.58 393.12 L554.78 396.94 L556.09 400.76 L557.51 404.57 L559.05 408.37 L560.70 412.16 L562.45 415.93 L564.31 419.68 L566.28 423.41 L568.35 427.11 L570.53 430.78 L572.80 434.42 L575.17 438.02 L577.64 441.58 L580.20 445.10 L582.86 448.58 L585.60 452.00 L588.43 455.38 L591.35 458.70 L594.35 461.96 L597.42 465.17 L600.58 468.31 L603.81 471.38 L607.11 474.39 L610.48 477.33 L613.91 480.19 L617.41 482.98 L620.97 485.69 L624.58 488.33 L628.25 490.87 L631.97 493.34 L635.74 495.71 L639.55 498.00 L643.40 500.20 L647.29 502.30 L651.21 504.31 L655.16 506.22 L659.14 508.04 L663.15 509.76 L667.17 511.37 L671.22 512.88 L675.27 514.29 L679.34 515.60 L683.41 516.79 L687.48 517.89 L691.56 518.87 L695.63 519.74 L699.69 520.51 L703.75 521.16 L707.78 521.70 L711.81 522.14 L715.80 522.46 L719.78 522.67 L723.72 522.76 L727.64 522.75 L731.52 522.62 L735.36 522.38 L739.16 522.03 L742.91 521.57 L746.62 520.99 L750.27 520.31 L753.87 519.51 L757.42 518.61 L760.90 517.59 L764.32 516.47 L767.67 515.25 L770.95 513.91 L774.16 512.48 L777.30 510.93 L780.35 509.29 L783.33 507.55 L786.22 505.71 L789.03 503.77 L791.75 501.73 L794.39 499.60 L796.92 497.38 L799.37 495.06 L801.71 492.66 L803.96 490.18 L806.11 487.61 L808.16 484.95 L905.96 352.95 L907.59 350.66 L909.16 348.31 L910.65 345.91 L912.06 343.46 L913.39 340.96 L914.65 338.41 L915.82 335.81 L916.92 333.16 L917.94 330.47 L918.88 327.74 L919.73 324.97 L920.50 322.16 L921.19 319.31 L921.80 316.42 L922.32 313.50 L922.76 310.55 L923.12 307.57 L923.39 304.56 L923.58 301.52 L891.30 340.80 L894.20 330.10 L894.80 317.20 L870.00 350.20 L860.00 364.50 L853.50 374.00 L848.00 380.00 L841.61 383.52 L839.36 384.22 L837.06 384.85 L834.70 385.40 L832.28 385.87 L829.82 386.27 L827.30 386.59 L824.74 386.84 L822.13 387.01 L819.48 387.10 L816.79 387.11 L814.06 387.05 L811.29 386.91 L808.49 386.69 L805.66 386.39 L802.80 386.02 L799.92 385.57 L797.01 385.04 L794.08 384.44 L791.14 383.77 L788.18 383.02 L785.20 382.19 L782.22 381.30 L779.23 380.33 L776.24 379.29 L773.24 378.17 L770.25 376.99 L767.26 375.74 L764.27 374.43 L761.30 373.05 L758.33 371.60 L755.38 370.09 L752.45 368.52 L749.54 366.88 L746.65 365.19 L743.78 363.44 L740.94 361.63 L738.13 359.77 L735.36 357.86 L732.62 355.89 L729.91 353.88 L727.25 351.82 L724.63 349.71 L722.05 347.56 L719.52 345.36 L717.04 343.13 L714.61 340.86 L712.24 338.55 L709.92 336.21 L707.66 333.83 L705.45 331.43 L703.31 329.00 L701.24 326.55 L699.23 324.07 L697.28 321.57 L695.41 319.05 L693.61 316.52 L691.88 313.97 L690.22 311.41 L688.64 308.84 L687.14 306.26 L685.71 303.68 L684.36 301.10 L683.10 298.51 L681.92 295.93 L680.82 293.35 L679.80 290.78 L678.87 288.22 L678.02 285.67 L677.26 283.14 L676.59 280.62 L676.01 278.11 L675.51 275.63 L675.11 273.17 L674.79 270.74 L674.56 268.33 L674.42 265.95 L674.37 263.61 L674.41 261.30 L674.54 259.02 L659.00 276.70 L657.09 276.95 L655.98 274.26 L654.93 271.57 L653.93 268.88 L652.99 266.18 L652.10 263.47 L651.28 260.77 L650.51 258.07 L649.79 255.36 L649.14 252.66 L648.54 249.97 L648.00 247.27 L647.52 244.59 L647.10 241.91 L646.74 239.24 L646.44 236.57 L646.20 233.92 L646.01 231.28 L645.89 228.65 L645.83 226.03 Z" fill="#033e7c"/>
<linearGradient id="gbl" x1="560" y1="400" x2="630" y2="495" gradientUnits="userSpaceOnUse"><stop offset="0" stop-color="#0866cc" stop-opacity="0"/><stop offset="0.6" stop-color="#0660c4" stop-opacity="0.6"/><stop offset="1" stop-color="#0a6ad8" stop-opacity="1"/></linearGradient>
<g clip-path="url(#cs)"><rect x="540" y="380" width="130" height="140" fill="url(#gbl)"/></g>
<path d="M734.00 521.80 L734.17 522.47 L736.78 522.26 L739.36 522.01 L741.93 521.70 L744.48 521.34 L747.00 520.93 L749.49 520.46 L751.97 519.95 L754.41 519.38 L756.83 518.76 L759.22 518.10 L761.58 517.38 L763.92 516.61 L766.22 515.79 L768.49 514.93 L770.72 514.01 L772.93 513.04 L775.10 512.03 L777.23 510.97 L779.33 509.86 L781.39 508.70 L783.41 507.50 L785.39 506.25 L787.34 504.96 L789.24 503.62 L791.10 502.23 L792.92 500.80 L794.70 499.33 L796.44 497.82 L798.13 496.26 L799.78 494.66 L801.38 493.02 L802.93 491.34 L804.44 489.62 L805.91 487.86 L807.32 486.06 L808.69 484.23 L810.00 482.36 L811.27 480.45 L812.49 478.51 L813.66 476.53 L814.77 474.52 L815.84 472.47 L816.85 470.40 L817.81 468.29 L818.72 466.15 L819.58 463.98 L820.38 461.79 L821.13 459.56 L821.83 457.31 L822.47 455.03 L823.06 452.73 L823.59 450.40 L824.07 448.05 L824.49 445.68 L824.86 443.29 L825.17 440.88 L825.43 438.44 L825.63 435.99 L825.78 433.52 L825.30 434.50 L825.06 434.99 L824.77 435.62 L824.42 436.37 L824.02 437.22 L823.58 438.13 L823.09 439.08 L822.56 440.05 L822.00 441.00 L821.42 441.92 L820.85 442.83 L820.24 443.76 L819.59 444.72 L818.86 445.75 L818.03 446.87 L817.09 448.11 L816.00 449.50 L814.71 451.08 L813.20 452.84 L811.56 454.74 L809.82 456.72 L808.07 458.74 L806.36 460.74 L804.75 462.68 L803.30 464.50 L802.03 466.20 L800.87 467.83 L799.79 469.41 L798.76 470.97 L797.75 472.53 L796.73 474.12 L795.65 475.77 L794.50 477.50 L793.26 479.34 L791.96 481.28 L790.62 483.28 L789.26 485.31 L787.90 487.33 L786.56 489.31 L785.25 491.21 L784.00 493.00 L782.80 494.71 L781.64 496.39 L780.52 498.02 L779.41 499.59 L778.31 501.09 L777.21 502.50 L776.11 503.81 L775.00 505.00 L773.91 506.03 L772.88 506.90 L771.88 507.65 L770.86 508.32 L769.79 508.95 L768.65 509.58 L767.40 510.25 L766.00 511.00 L764.45 511.84 L762.79 512.73 L761.02 513.65 L759.17 514.58 L757.25 515.49 L755.29 516.36 L753.30 517.17 L751.30 517.90 L749.14 518.56 L746.75 519.18 L744.24 519.75 L741.73 520.28 L739.33 520.75 L737.17 521.17 L735.35 521.52 L734.00 521.80 Z" fill="#0582f8"/>
<g clip-path="url(#cs)"><path d="M674.50 259.00 L577.30 388.50 L578.00 388.83 L577.65 390.96 L577.40 393.12 L577.22 395.31 L577.13 397.54 L577.13 399.81 L577.21 402.10 L577.38 404.43 L577.63 406.78 L577.96 409.16 L578.38 411.56 L578.89 413.98 L579.48 416.41 L580.15 418.87 L580.90 421.34 L581.73 423.82 L582.65 426.32 L583.65 428.82 L584.72 431.33 L585.88 433.84 L587.11 436.36 L588.42 438.87 L589.80 441.38 L591.26 443.89 L592.79 446.39 L594.39 448.88 L596.07 451.37 L597.81 453.84 L599.62 456.29 L601.49 458.73 L603.43 461.14 L605.44 463.54 L607.50 465.91 L609.62 468.26 L611.80 470.58 L614.04 472.87 L616.33 475.13 L618.67 477.36 L621.06 479.55 L623.50 481.70 L625.98 483.82 L628.51 485.89 L631.07 487.93 L633.68 489.92 L636.33 491.86 L639.01 493.76 L641.72 495.60 L644.46 497.40 L647.23 499.14 L650.02 500.83 L652.84 502.47 L655.68 504.05 L658.54 505.57 L661.41 507.03 L664.29 508.43 L667.19 509.77 L670.10 511.05 L673.01 512.27 L675.92 513.42 L678.84 514.50 L681.75 515.52 L684.66 516.47 L687.56 517.35 L690.46 518.16 L693.34 518.90 L696.21 519.58 L699.06 520.18 L701.90 520.71 L704.71 521.16 L707.50 521.55 L710.26 521.86 L713.00 522.10 L715.70 522.27 L718.38 522.36 L721.01 522.38 L723.61 522.33 L726.17 522.20 L728.69 522.00 L731.16 521.73 L733.59 521.39 L734.00 521.80 L735.35 521.52 L737.17 521.17 L739.33 520.75 L741.73 520.28 L744.24 519.75 L746.75 519.18 L749.14 518.56 L751.30 517.90 L753.30 517.17 L755.29 516.36 L757.25 515.49 L759.17 514.58 L761.02 513.65 L762.79 512.73 L764.45 511.84 L766.00 511.00 L767.40 510.25 L768.65 509.58 L769.79 508.95 L770.86 508.32 L771.88 507.65 L772.88 506.90 L773.91 506.03 L775.00 505.00 L776.11 503.81 L777.21 502.50 L778.31 501.09 L779.41 499.59 L780.52 498.02 L781.64 496.39 L782.80 494.71 L784.00 493.00 L785.25 491.21 L786.56 489.31 L787.90 487.33 L789.26 485.31 L790.62 483.28 L791.96 481.28 L793.26 479.34 L794.50 477.50 L795.65 475.77 L796.73 474.12 L797.75 472.53 L798.76 470.97 L799.79 469.41 L800.87 467.83 L802.03 466.20 L803.30 464.50 L804.75 462.68 L806.36 460.74 L808.07 458.74 L809.82 456.72 L811.56 454.74 L813.20 452.84 L814.71 451.08 L816.00 449.50 L817.09 448.11 L818.03 446.87 L818.86 445.75 L819.59 444.72 L820.24 443.76 L820.85 442.83 L821.42 441.92 L822.00 441.00 L822.56 440.05 L823.09 439.08 L823.58 438.13 L824.02 437.22 L824.42 436.37 L824.77 435.62 L825.06 434.99 L825.30 434.50 L881.80 355.00 L886.00 350.50 L891.30 340.80 L894.20 330.10 L894.80 317.20 L870.00 350.20 L860.00 364.50 L853.50 374.00 L848.00 380.00 L841.61 383.52 L839.36 384.22 L837.06 384.85 L834.70 385.40 L832.28 385.87 L829.82 386.27 L827.30 386.59 L824.74 386.84 L822.13 387.01 L819.48 387.10 L816.79 387.11 L814.06 387.05 L811.29 386.91 L808.49 386.69 L805.66 386.39 L802.80 386.02 L799.92 385.57 L797.01 385.04 L794.08 384.44 L791.14 383.77 L788.18 383.02 L785.20 382.19 L782.22 381.30 L779.23 380.33 L776.24 379.29 L773.24 378.17 L770.25 376.99 L767.26 375.74 L764.27 374.43 L761.30 373.05 L758.33 371.60 L755.38 370.09 L752.45 368.52 L749.54 366.88 L746.65 365.19 L743.78 363.44 L740.94 361.63 L738.13 359.77 L735.36 357.86 L732.62 355.89 L729.91 353.88 L727.25 351.82 L724.63 349.71 L722.05 347.56 L719.52 345.36 L717.04 343.13 L714.61 340.86 L712.24 338.55 L709.92 336.21 L707.66 333.83 L705.45 331.43 L703.31 329.00 L701.24 326.55 L699.23 324.07 L697.28 321.57 L695.41 319.05 L693.61 316.52 L691.88 313.97 L690.22 311.41 L688.64 308.84 L687.14 306.26 L685.71 303.68 L684.36 301.10 L683.10 298.51 L681.92 295.93 L680.82 293.35 L679.80 290.78 L678.87 288.22 L678.02 285.67 L677.26 283.14 L676.59 280.62 L676.01 278.11 L675.51 275.63 L675.11 273.17 L674.79 270.74 L674.56 268.33 L674.42 265.95 L674.37 263.61 L674.41 261.30 L674.54 259.02 Z" fill="#00ffff"/>
<g clip-path="url(#cc)"><g clip-path="url(#cd)"><g mask="url(#ma)" fill="none">
<circle cx="732" cy="350" r="6.0" stroke="url(#chk)" stroke-width="3.6" opacity="0.17"/>
<circle cx="732" cy="350" r="10.2" stroke="url(#chk)" stroke-width="3.6" opacity="0.17"/>
<circle cx="732" cy="350" r="14.4" stroke="url(#chk)" stroke-width="3.6" opacity="0.17"/>
<circle cx="732" cy="350" r="18.6" stroke="url(#chk)" stroke-width="3.6" opacity="0.17"/>
<circle cx="732" cy="350" r="22.8" stroke="url(#chk)" stroke-width="3.6" opacity="0.19"/>
<circle cx="732" cy="350" r="27.0" stroke="url(#chk)" stroke-width="3.6" opacity="0.24"/>
<circle cx="732" cy="350" r="31.2" stroke="url(#chk)" stroke-width="3.6" opacity="0.29"/>
<circle cx="732" cy="350" r="35.4" stroke="url(#chk)" stroke-width="3.6" opacity="0.35"/>
<circle cx="732" cy="350" r="39.6" stroke="url(#chk)" stroke-width="3.6" opacity="0.40"/>
<circle cx="732" cy="350" r="43.8" stroke="url(#chk)" stroke-width="3.6" opacity="0.45"/>
<circle cx="732" cy="350" r="48.0" stroke="url(#chk)" stroke-width="3.6" opacity="0.51"/>
<circle cx="732" cy="350" r="52.2" stroke="url(#chk)" stroke-width="3.6" opacity="0.56"/>
<circle cx="732" cy="350" r="56.4" stroke="url(#chk)" stroke-width="3.6" opacity="0.61"/>
<circle cx="732" cy="350" r="60.6" stroke="url(#chk)" stroke-width="3.6" opacity="0.67"/>
<circle cx="732" cy="350" r="64.8" stroke="url(#chk)" stroke-width="3.6" opacity="0.72"/>
<circle cx="732" cy="350" r="69.0" stroke="url(#chk)" stroke-width="3.6" opacity="0.77"/>
<circle cx="732" cy="350" r="73.2" stroke="url(#chk)" stroke-width="3.6" opacity="0.83"/>
<circle cx="732" cy="350" r="77.4" stroke="url(#chk)" stroke-width="3.6" opacity="0.88"/>
<circle cx="732" cy="350" r="81.6" stroke="url(#chk)" stroke-width="3.6" opacity="0.93"/>
<circle cx="732" cy="350" r="85.8" stroke="url(#chk)" stroke-width="3.6" opacity="0.95"/>
<circle cx="732" cy="350" r="90.0" stroke="url(#chk)" stroke-width="3.6" opacity="0.95"/>
<circle cx="732" cy="350" r="94.2" stroke="url(#chk)" stroke-width="3.6" opacity="0.95"/>
<circle cx="732" cy="350" r="98.4" stroke="url(#chk)" stroke-width="3.6" opacity="0.95"/>
<circle cx="732" cy="350" r="102.6" stroke="url(#chk)" stroke-width="3.6" opacity="0.95"/>
<circle cx="732" cy="350" r="106.8" stroke="url(#chk)" stroke-width="3.6" opacity="0.95"/>
<circle cx="732" cy="350" r="111.0" stroke="url(#chk)" stroke-width="3.6" opacity="0.95"/>
<circle cx="732" cy="350" r="115.2" stroke="url(#chk)" stroke-width="3.6" opacity="0.95"/>
<circle cx="732" cy="350" r="119.4" stroke="url(#chk)" stroke-width="3.6" opacity="0.95"/>
<circle cx="732" cy="350" r="123.6" stroke="url(#chk)" stroke-width="3.6" opacity="0.95"/>
<circle cx="732" cy="350" r="127.8" stroke="url(#chk)" stroke-width="3.6" opacity="0.95"/>
<circle cx="732" cy="350" r="132.0" stroke="url(#chk)" stroke-width="3.6" opacity="0.95"/>
<circle cx="732" cy="350" r="136.2" stroke="url(#chk)" stroke-width="3.6" opacity="0.95"/>
<circle cx="732" cy="350" r="140.4" stroke="url(#chk)" stroke-width="3.6" opacity="0.95"/>
<circle cx="732" cy="350" r="144.6" stroke="url(#chk)" stroke-width="3.6" opacity="0.95"/>
<circle cx="732" cy="350" r="148.8" stroke="url(#chk)" stroke-width="3.6" opacity="0.95"/>
<circle cx="732" cy="350" r="153.0" stroke="url(#chk)" stroke-width="3.6" opacity="0.95"/>
<circle cx="732" cy="350" r="157.2" stroke="url(#chk)" stroke-width="3.6" opacity="0.95"/>
<circle cx="732" cy="350" r="161.4" stroke="url(#chk)" stroke-width="3.6" opacity="0.95"/>
<circle cx="732" cy="350" r="165.6" stroke="url(#chk)" stroke-width="3.6" opacity="0.95"/>
<circle cx="732" cy="350" r="169.8" stroke="url(#chk)" stroke-width="3.6" opacity="0.95"/>
<circle cx="732" cy="350" r="174.0" stroke="url(#chk)" stroke-width="3.6" opacity="0.95"/>
<circle cx="732" cy="350" r="178.2" stroke="url(#chk)" stroke-width="3.6" opacity="0.95"/>
<circle cx="732" cy="350" r="182.4" stroke="url(#chk)" stroke-width="3.6" opacity="0.95"/>
<circle cx="732" cy="350" r="186.6" stroke="url(#chk)" stroke-width="3.6" opacity="0.95"/>
<circle cx="732" cy="350" r="190.8" stroke="url(#chk)" stroke-width="3.6" opacity="0.95"/>
<circle cx="732" cy="350" r="195.0" stroke="url(#chk)" stroke-width="3.6" opacity="0.95"/>
<circle cx="732" cy="350" r="199.2" stroke="url(#chk)" stroke-width="3.6" opacity="0.95"/>
<circle cx="732" cy="350" r="203.4" stroke="url(#chk)" stroke-width="3.6" opacity="0.95"/>
<circle cx="732" cy="350" r="207.6" stroke="url(#chk)" stroke-width="3.6" opacity="0.95"/>
<circle cx="732" cy="350" r="211.8" stroke="url(#chk)" stroke-width="3.6" opacity="0.95"/>
</g></g></g>
<g clip-path="url(#cc)" stroke="#0a80e0" fill="none">
<line x1="818.4" y1="370" x2="701.2" y2="530" stroke-width="1.1"/>
<line x1="812.3" y1="370" x2="695.1" y2="530" stroke-width="2.1"/>
<line x1="808.7" y1="370" x2="691.5" y2="530" stroke-width="2.3"/>
<line x1="805.1" y1="370" x2="687.9" y2="530" stroke-width="2.3"/>
<line x1="801.5" y1="370" x2="684.3" y2="530" stroke-width="2.3"/>
<line x1="797.9" y1="370" x2="680.7" y2="530" stroke-width="2.3"/>
<line x1="794.3" y1="370" x2="677.1" y2="530" stroke-width="2.2"/>
<line x1="790.7" y1="370" x2="673.5" y2="530" stroke-width="2.1"/>
<line x1="787.1" y1="370" x2="669.9" y2="530" stroke-width="2.0"/>
<line x1="783.5" y1="370" x2="666.3" y2="530" stroke-width="1.9"/>
<line x1="779.9" y1="370" x2="662.7" y2="530" stroke-width="1.8"/>
<line x1="776.3" y1="370" x2="659.1" y2="530" stroke-width="1.6"/>
<line x1="772.7" y1="370" x2="655.5" y2="530" stroke-width="1.4"/>
<line x1="769.1" y1="370" x2="651.9" y2="530" stroke-width="1.2"/>
<line x1="765.5" y1="370" x2="648.3" y2="530" stroke-width="1.0"/>
<line x1="779.8" y1="435.5" x2="705.5" y2="520.6" stroke-width="0.7" stroke="#0890c8"/>
</g></g>
<line x1="674.5" y1="210" x2="674.5" y2="259" stroke="#40f0f0" stroke-width="1.1"/>
<line x1="576.6" y1="345" x2="576.6" y2="390" stroke="#e8f090" stroke-width="1.1"/>
<path d="M646.9 226.3 L549 359.3" stroke="#d02828" stroke-width="1.3"/>
<path d="M645.83 226.03 L645.83 226.03 L645.89 228.65 L646.01 231.28 L646.20 233.92 L646.44 236.57 L646.74 239.24 L647.10 241.91 L647.52 244.59 L648.00 247.27 L648.54 249.97 L649.14 252.66 L649.79 255.36 L650.51 258.07 L651.28 260.77 L652.10 263.47 L652.99 266.18 L653.93 268.88 L654.93 271.57 L655.98 274.26 L657.09 276.95" stroke="#d02828" stroke-width="1" fill="none"/>
<path d="M905.96 352.95 L905.96 352.95 L907.59 350.66 L909.16 348.31 L910.65 345.91 L912.06 343.46 L913.39 340.96 L914.65 338.41 L915.82 335.81 L916.92 333.16 L917.94 330.47 L918.88 327.74 L919.73 324.97 L920.50 322.16 L921.19 319.31 L921.80 316.42 L922.32 313.50 L922.76 310.55 L923.12 307.57 L923.39 304.56 L923.58 301.52" stroke="#c02828" stroke-width="0.9" fill="none"/>
<path d="M637.6 223.6 L656.8 228.8 M646.5 218.4 L646.9 226.3 M651.6 219.9 L646.9 226.3" stroke="#d02828" stroke-width="1"/>
<path d="M829.82 386.27 L829.82 386.27 L827.30 386.59 L824.74 386.84 L822.13 387.01 L819.48 387.10 L816.79 387.11 L814.06 387.05 L811.29 386.91 L808.49 386.69 L805.66 386.39 L802.80 386.02 L799.92 385.57 L797.01 385.04 L794.08 384.44 L791.14 383.77 L788.18 383.02 L785.20 382.19 L782.22 381.30 L779.23 380.33 L776.24 379.29 L773.24 378.17 L770.25 376.99 L767.26 375.74 L764.27 374.43 L761.30 373.05 L758.33 371.60 L755.38 370.09 L752.45 368.52 L749.54 366.88 L746.65 365.19 L743.78 363.44 L740.94 361.63 L738.13 359.77 L735.36 357.86 L732.62 355.89 L729.91 353.88 L727.25 351.82 L724.63 349.71 L722.05 347.56 L719.52 345.36" stroke="#a03040" stroke-width="0.6" fill="none" opacity="0.6"/></svg>
<div class="a" style="left:857px;top:656px;height:16px;width:60px;font-weight:bold;font-size:15px;line-height:16px;color:#ffe4e4;-webkit-text-stroke:0.7px #d82828;white-space:nowrap"><span style="display:inline-block;transform:scaleX(1.18);transform-origin:0 0">三维网</span></div>
<div class="a" style="left:910px;top:655px;height:18px;font-family:'Liberation Sans';font-weight:bold;font-size:15px;line-height:18px;color:#ffe4e4;-webkit-text-stroke:0.7px #d82828;white-space:nowrap"><span id="wm" style="display:inline-block;transform:scaleX(1.27);transform-origin:0 0">www.3dportal.cn</span></div>
</body></html>
